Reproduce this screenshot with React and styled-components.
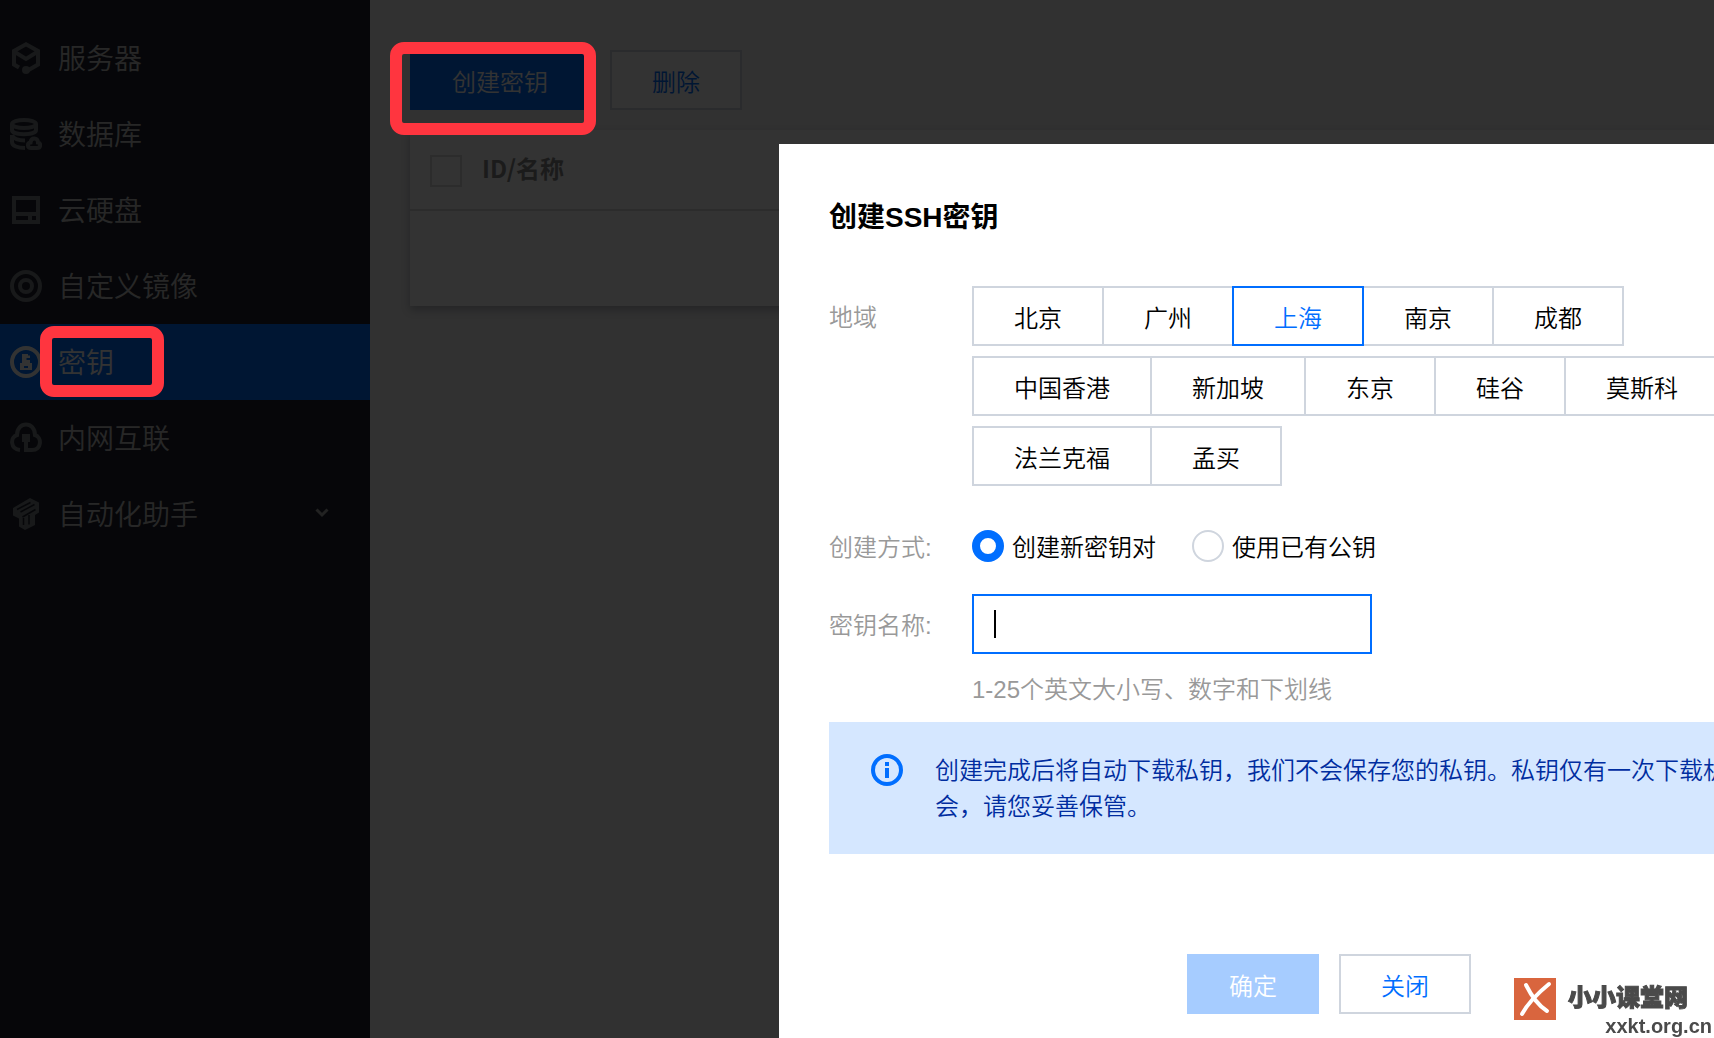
import React from "react";
import styled, { createGlobalStyle, css } from "styled-components";

const GlobalStyle = createGlobalStyle`
  * {
    box-sizing: border-box;
  }
  body {
    margin: 0;
    overflow: hidden;
    background-color: #f2f2f2;
  }
  body, button, input {
    font-family: "Liberation Sans", "Noto Sans CJK SC", sans-serif;
    font-size: 24px;
    font-weight: 350;
    color: #000;
  }
`

const Page = styled.div`
  display: flex;
  min-height: 100vh;
  overflow: hidden;
`

const Sidebar = styled.nav`
  width: 370px;
  flex-shrink: 0;
  padding-top: 20px;
  background-color: #1e222d;
`

const MenuItem = styled.a`
  display: flex;
  align-items: center;
  gap: 16px;
  height: 76px;
  padding: 0 32px 0 10px;
  font-size: 28px;
  text-decoration: none;
  color: ${(props) => (props.$active ? "#fff" : "#c4c4c4")};
  background-color: ${(props) => (props.$active ? "#006eff" : "transparent")};

  > svg {
    width: 32px;
    height: 32px;
    color: ${(props) => (props.$active ? "#fff" : "#787c82")};
  }
`

const MenuText = styled.span`
  flex: 1;
  padding-bottom: 2px;
`

const Content = styled.main`
  flex: 1;
  min-width: 0;
  padding: 50px 0 0 40px;
`

const Toolbar = styled.div`
  display: flex;
  gap: 20px;
  margin-bottom: 20px;
`

const Button = styled.button`
  height: 60px;
  padding: 0 40px;
  border: 2px solid #cfd5de;
  background-color: #fff;
  color: #006eff;

  ${(props) => props.$primary && css`
    border-color: #006eff;
    background-color: #006eff;
    color: #fff;
  `}

  &:disabled {
    border-color: #a6ccff;
    background-color: #a6ccff;
  }
`

const Table = styled.table`
  width: 100%;
  border-collapse: collapse;
  background-color: #fff;
  box-shadow: 0 4px 8px rgba(54, 58, 80, 0.32);

  th {
    height: 80px;
    padding: 0 0 4px;
    border-bottom: 2px solid #dcdcdc;
    text-align: left;
    font-family: "Noto Sans CJK SC", sans-serif;
    font-weight: 700;
    color: #888;
  }

  td {
    height: 96px;
  }
`

const CheckCell = styled.th`
  width: 72px;
`

const Checkbox = styled.input`
  appearance: none;
  display: block;
  width: 32px;
  height: 32px;
  margin: 6px 0 0 20px;
  border: 2px solid #dcdcdc;
`

const Mask = styled.div`
  position: fixed;
  inset: 0;
  background-color: rgba(0, 0, 0, 0.8);
`

const Dialog = styled.section`
  position: fixed;
  top: 144px;
  left: 779px;
  width: 1100px;
  min-height: 920px;
  padding: 52px 50px;
  background-color: #fff;
`

const DialogTitle = styled.h3`
  margin: 0 0 46px;
  font-size: 28px;
  line-height: 44px;
  font-weight: 700;
`

const FormRow = styled.div`
  display: flex;
  margin-bottom: ${(props) => props.$space};
`

const Label = styled.div`
  width: 143px;
  flex-shrink: 0;
  padding-top: 2px;
  line-height: 60px;
  color: #999;
`

const Regions = styled.div`
  display: flex;
  flex-direction: column;
  gap: 10px;
`

const RegionLine = styled.div`
  display: flex;
`

const RegionButton = styled(Button)`
  flex-shrink: 0;
  color: #000;

  & + & {
    margin-left: -2px;
  }

  ${(props) => props.$selected && css`
    position: relative;
    border-color: #006eff;
    color: #006eff;
  `}
`

const Radios = styled.div`
  display: flex;
  align-items: center;
  gap: 36px;
  height: 60px;
`

const RadioLabel = styled.label`
  display: flex;
  align-items: center;
  gap: 8px;

  span {
    padding-bottom: 2px;
  }
`

const Radio = styled.input`
  appearance: none;
  width: 32px;
  height: 32px;
  margin: 0;
  border: 2px solid #cfd5de;
  border-radius: 50%;

  &:checked {
    border: 8px solid #006eff;
  }
`

const NameField = styled.div`
  position: relative;
  width: 400px;
`

const NameInput = styled.input`
  display: block;
  width: 100%;
  height: 60px;
  padding: 0 20px;
  border: 2px solid #006eff;
  border-radius: 0;
  outline: none;
  caret-color: transparent;
`

const Caret = styled.span`
  position: absolute;
  top: 16px;
  left: 22px;
  width: 2px;
  height: 28px;
  background-color: #000;
`

const Hint = styled.p`
  margin: 18px 0 0;
  line-height: 36px;
  color: #999;
`

const Alert = styled.div`
  display: flex;
  gap: 32px;
  padding: 31px 90px 29px 42px;
  background-color: #d5e7ff;
  color: #002da0;
  line-height: 36px;

  svg {
    flex-shrink: 0;
    margin-top: 1px;
  }
`

const Footer = styled.div`
  display: flex;
  justify-content: center;
  gap: 20px;
  margin-top: 100px;
`

const Marker = styled.div`
  position: fixed;
  border: 12px solid #ff353f;
  border-radius: 14px;
`

const ButtonMarker = styled(Marker)`
  top: 42px;
  left: 390px;
  width: 206px;
  height: 93px;
`

const MenuMarker = styled(Marker)`
  top: 326px;
  left: 40px;
  width: 124px;
  height: 71px;
`

const Watermark = styled.div`
  position: fixed;
  right: 2px;
  bottom: 0;
  display: flex;
  gap: 12px;
  color: #4a4a4a;
`

const SiteName = styled.div`
  margin-top: 4px;
  padding-right: 24px;
  font-size: 24px;
  line-height: 32px;
  font-weight: 900;
  -webkit-text-stroke: 1px #4a4a4a;
`

const SiteUrl = styled.div`
  font-family: "Liberation Sans Narrow", "Liberation Sans", sans-serif;
  font-size: 20px;
  line-height: 24px;
  font-weight: 700;
  text-align: right;
`

const ServerIcon = () => (
  <svg viewBox="0 0 32 32" fill="none" stroke="currentColor" strokeWidth="4">
    <path d="M9 25.500 4 22.500V9L16 2.300 28 9V22.500L16 29.500" />
    <path d="M4 9.500 16 17 28 9.500" />
    <circle cx="16" cy="28" r="4" fill="currentColor" stroke="none" />
  </svg>
)

const DatabaseIcon = () => (
  <svg viewBox="0 0 32 32" fill="none" stroke="currentColor" strokeWidth="4">
    <ellipse cx="14" cy="6" rx="12" ry="4" />
    <path d="M2 6V12C2 17.500 26 17.500 26 12V6" />
    <path d="M2 17V24C2 28 8 30 15 30M2 17C4 21.500 9 22.500 15 22.500" />
    <path d="M21 30C17 30 17 25 20.500 24.500 21 19 28 19 28 24.500 31 25 31 30 27 30Z" />
  </svg>
)

const DiskIcon = () => (
  <svg viewBox="0 0 32 32" fill="none" stroke="currentColor" strokeWidth="4">
    <path d="M4 4H28V28H4ZM4 20H28M20 20V28" />
  </svg>
)

const ImageIcon = () => (
  <svg viewBox="0 0 32 32" fill="none" stroke="currentColor" strokeWidth="4">
    <circle cx="16" cy="16" r="14" />
    <circle cx="16" cy="16" r="6" />
  </svg>
)

const KeyIcon = () => (
  <svg viewBox="0 0 32 32" fill="none">
    <circle cx="16" cy="16" r="14" stroke="currentColor" strokeWidth="4" />
    <path
      d="M12 8H18V9.500H20V12H16.500V14H20V17H22V24H10V17H12ZM14 20V22H18V20Z"
      fill="currentColor"
      fillRule="evenodd"
    />
  </svg>
)

const NetworkIcon = () => (
  <svg viewBox="0 0 32 32" fill="none" stroke="currentColor" strokeWidth="4">
    <path d="M10 28C0 27 0 15 7 13 7-1 25-1 25 13 32 15 32 28 22 28H16V18" />
    <path d="M12 12H20V20H12Z" fill="currentColor" stroke="none" />
  </svg>
)

const AssistantIcon = () => (
  <svg viewBox="0 0 32 32" fill="currentColor">
    <path d="M3 10 20 0 29 4.500V14.500L25 17V27L15 32 9 28.500V20.500L3 17.500Z" />
    <path
      d="M7 11.500 20.500 4.500M10.500 14 24.500 6.500M12.500 19 25.500 11.500M13.500 20V27M19 17V26.500"
      fill="none"
      stroke="#1e222d"
      strokeWidth="1.5"
    />
  </svg>
)

const Arrow = () => (
  <svg viewBox="0 0 32 32" fill="none" stroke="#aaa" strokeWidth="3">
    <path d="M10.500 11.500 16 17 21.500 11.500" />
  </svg>
)

const InfoIcon = () => (
  <svg width="32" height="32" viewBox="0 0 32 32" fill="none">
    <circle cx="16" cy="16" r="14" stroke="#006eff" strokeWidth="4" />
    <path d="M14 8H18V12H14ZM14 14H18V24H14Z" fill="#006eff" />
  </svg>
)

const SiteLogo = () => (
  <svg width="42" height="42" viewBox="0 0 42 42" fill="none">
    <path d="M0 0H42V42H0Z" fill="#d9653e" />
    <path
      d="M12 7C17 17 25 28 33 33M35 6C24 15 14 25 8 36"
      stroke="#fff"
      strokeWidth="4"
      strokeLinecap="round"
    />
  </svg>
)

const menu = [
  { name: "服务器", Icon: ServerIcon },
  { name: "数据库", Icon: DatabaseIcon },
  { name: "云硬盘", Icon: DiskIcon },
  { name: "自定义镜像", Icon: ImageIcon },
  { name: "密钥", Icon: KeyIcon },
  { name: "内网互联", Icon: NetworkIcon },
  { name: "自动化助手", Icon: AssistantIcon, children: true },
]

const regions = [
  ["北京", "广州", "上海", "南京", "成都"],
  ["中国香港", "新加坡", "东京", "硅谷", "莫斯科"],
  ["法兰克福", "孟买"],
]

class App extends React.Component {
  state = {
    region: "上海",
    mode: "new",
    keyName: "",
  }

  render() {
    const { region, mode, keyName } = this.state

    return (
      <Page>
        <GlobalStyle />

        <Sidebar>
          {menu.map(({ name, Icon, children }) => (
            <MenuItem key={name} href="#" $active={name === "密钥"}>
              <Icon />
              <MenuText>{name}</MenuText>
              {children && <Arrow />}
            </MenuItem>
          ))}
        </Sidebar>

        <Content>
          <Toolbar>
            <Button $primary>创建密钥</Button>
            <Button>删除</Button>
          </Toolbar>
          <Table>
            <thead>
              <tr>
                <CheckCell><Checkbox type="checkbox" aria-label="ID/名称" /></CheckCell>
                <th>ID/名称</th>
              </tr>
            </thead>
            <tbody>
              <tr><td colSpan="2" /></tr>
            </tbody>
          </Table>
        </Content>

        <Mask />

        <Dialog role="dialog" aria-labelledby="dialog-title">
          <DialogTitle id="dialog-title">创建SSH密钥</DialogTitle>

          <FormRow $space="30px">
            <Label>地域</Label>
            <Regions>
              {regions.map((line) => (
                <RegionLine key={line[0]}>
                  {line.map((item) => (
                    <RegionButton
                      key={item}
                      $selected={item === region}
                      onClick={() => this.setState({ region: item })}
                    >
                      {item}
                    </RegionButton>
                  ))}
                </RegionLine>
              ))}
            </Regions>
          </FormRow>

          <FormRow $space="16px">
            <Label>创建方式:</Label>
            <Radios>
              <RadioLabel>
                <Radio
                  type="radio"
                  name="mode"
                  checked={mode === "new"}
                  onChange={() => this.setState({ mode: "new" })}
                />
                <span>创建新密钥对</span>
              </RadioLabel>
              <RadioLabel>
                <Radio
                  type="radio"
                  name="mode"
                  checked={mode === "exist"}
                  onChange={() => this.setState({ mode: "exist" })}
                />
                <span>使用已有公钥</span>
              </RadioLabel>
            </Radios>
          </FormRow>

          <FormRow $space="14px">
            <Label as="label" htmlFor="key-name">密钥名称:</Label>
            <NameField>
              <NameInput
                id="key-name"
                value={keyName}
                onChange={(e) => this.setState({ keyName: e.target.value })}
              />
              {keyName === "" && <Caret />}
              <Hint>1-25个英文大小写、数字和下划线</Hint>
            </NameField>
          </FormRow>

          <Alert>
            <InfoIcon />
            <span>创建完成后将自动下载私钥，我们不会保存您的私钥。私钥仅有一次下载机会，请您妥善保管。</span>
          </Alert>

          <Footer>
            <Button $primary disabled>确定</Button>
            <Button>关闭</Button>
          </Footer>
        </Dialog>

        <ButtonMarker />
        <MenuMarker />

        <Watermark>
          <SiteLogo />
          <div>
            <SiteName>小小课堂网</SiteName>
            <SiteUrl>xxkt.org.cn</SiteUrl>
          </div>
        </Watermark>
      </Page>
    )
  }
}

export default App;
